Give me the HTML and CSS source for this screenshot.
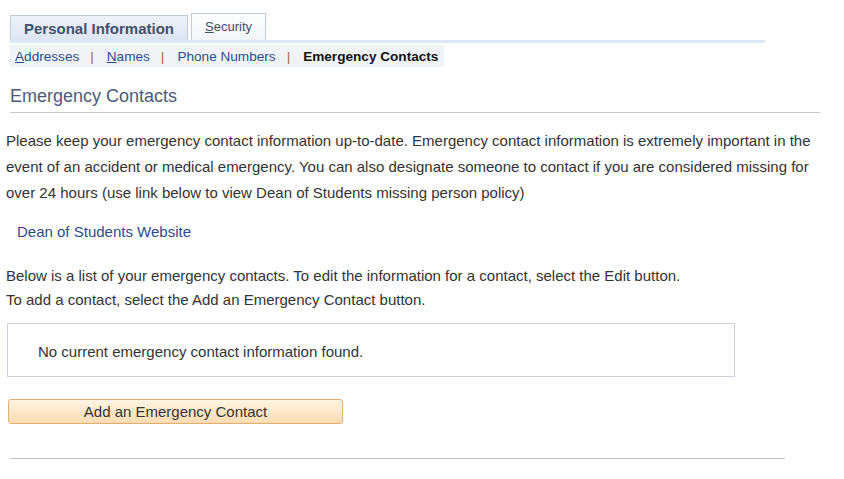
FILE: index.html
```html
<!DOCTYPE html>
<html lang="en">
<head>
    <meta charset="UTF-8">
    <meta name="viewport" content="width=device-width, initial-scale=1.0">
    <title>Emergency Contacts</title>
    <link rel="stylesheet" href="styles.css">
</head>
<body>
    <div class="page">
        <div class="tabs">
            <div class="tab active">Personal Information</div>
            <div class="tab"><u>S</u>ecurity</div>
        </div>
        <div class="subnav">
            <a href="#"><u>A</u>ddresses</a>
            <span class="sep">|</span>
            <a href="#"><u>N</u>ames</a>
            <span class="sep">|</span>
            <a href="#">Phone Numbers</a>
            <span class="sep">|</span>
            <span class="current">Emergency Contacts</span>
        </div>

        <h1 class="heading">Emergency Contacts</h1>

        <p class="intro">Please keep your emergency contact information up-to-date. Emergency contact information is extremely important in the event of an accident or medical emergency. You can also designate someone to contact if you are considered missing for over 24 hours (use link below to view Dean of Students missing person policy)</p>

        <a class="dean-link" href="#">Dean of Students Website</a>

        <p class="list-info">Below is a list of your emergency contacts. To edit the information for a contact, select the Edit button.<br>To add a contact, select the Add an Emergency Contact button.</p>

        <div class="empty-box">No current emergency contact information found.</div>

        <button class="add-btn">Add an Emergency Contact</button>

        <hr class="bottom-rule">
    </div>
</body>
</html>
```

FILE: styles.css
```css
body {
    font-family: "Liberation Sans", Arial, sans-serif;
    margin: 0;
    padding: 0;
    background: #ffffff;
    color: #333333;
}
.page {
    padding: 13px 0 0 0;
}
.tabs {
    display: flex;
    align-items: flex-end;
    gap: 3px;
    margin-left: 10px;
    width: 755px;
    border-bottom: 3px solid #dde6f4;
}
.tab {
    border: 1px solid #c3cad6;
    border-bottom: none;
    background: linear-gradient(#ffffff, #f2f4f7);
    color: #44506a;
    font-size: 13px;
    padding: 5px 13px 0 13px;
    box-sizing: border-box;
    height: 27px;
}
.tab.active {
    background: linear-gradient(#eef3fa, #dbe5f3);
    font-weight: bold;
    font-size: 15px;
    padding: 4px 13px 0 13px;
    height: 25px;
}
.subnav {
    display: inline-flex;
    align-items: center;
    margin-left: 10px;
    margin-top: 2px;
    height: 22px;
    padding: 0 6px 0 5px;
    background: #f1f4f6;
    font-size: 13.6px;
}
.subnav a {
    color: #2b4c8c;
    text-decoration: none;
}
.subnav .sep {
    color: #9a6a3a;
    margin: 0 13px 0 11px;
}
.subnav .current {
    font-weight: bold;
    color: #111111;
}
.heading {
    font-size: 18px;
    font-weight: normal;
    color: #4c5a78;
    margin: 19px 24px 0 10px;
    padding-bottom: 5px;
    border-bottom: 1px solid #c8c8c8;
}
.intro {
    font-size: 15px;
    line-height: 26px;
    margin: 15px 26px 0 6px;
}
.dean-link {
    display: block;
    font-size: 15px;
    color: #2b4c8c;
    text-decoration: none;
    margin: 17px 0 0 17px;
}
.list-info {
    font-size: 15px;
    line-height: 24px;
    margin: 24px 0 0 6px;
}
.empty-box {
    width: 728px;
    height: 54px;
    box-sizing: border-box;
    margin: 11px 0 0 7px;
    border: 1px solid #cfd2dc;
    padding: 19px 0 0 30px;
    font-size: 15px;
}
.add-btn {
    display: block;
    width: 335px;
    height: 25px;
    margin: 22px 0 0 8px;
    border: 1px solid #e4ad74;
    border-radius: 3px;
    background: linear-gradient(#fff4e4, #fcdcb0);
    font-family: "Liberation Sans", Arial, sans-serif;
    font-size: 15px;
    color: #333333;
    cursor: pointer;
}
.bottom-rule {
    width: 775px;
    margin: 34px 0 0 10px;
    border: none;
    border-top: 1px solid #c4c4c4;
}
```
